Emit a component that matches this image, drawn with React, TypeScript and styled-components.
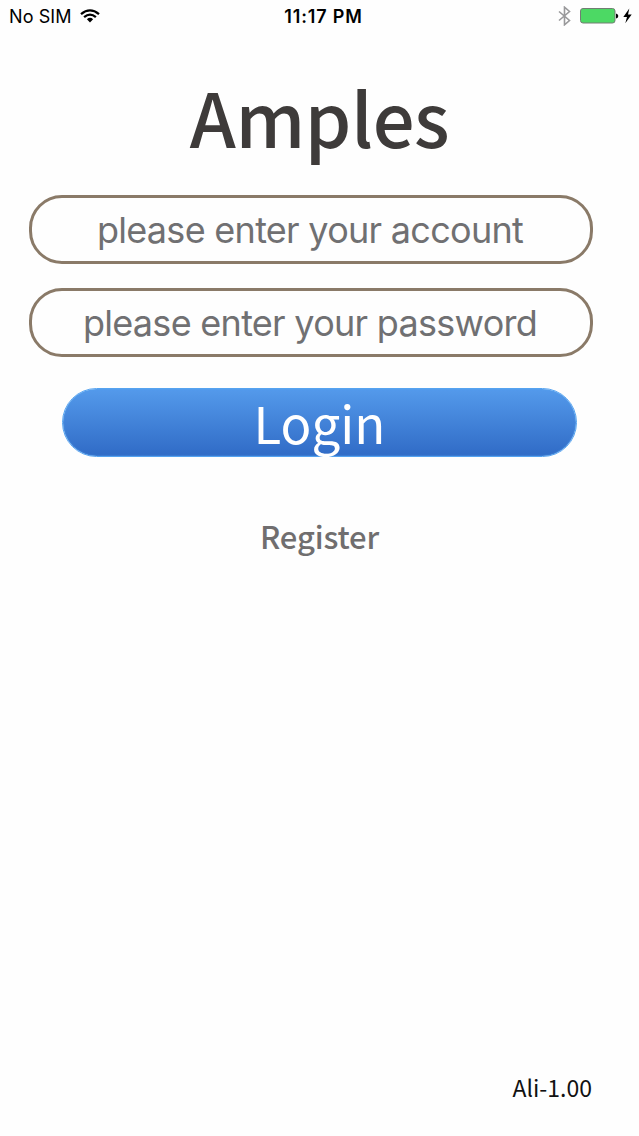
import React from "react";
import styled, { createGlobalStyle } from "styled-components";

const GlobalStyle = createGlobalStyle`
  *, *::before, *::after { box-sizing: border-box; }
  html, body { margin: 0; padding: 0; background: #fefefe; }
`;

const sans = `"Noto Sans CJK SC", "Noto Sans", sans-serif`;

const Screen = styled.main`
  display: flex;
  flex-direction: column;
  width: 100%;
  height: 1136px;
  overflow: hidden;
  background: #fefefe;
  font-family: ${sans};
`;

const StatusBar = styled.header`
  display: grid;
  grid-template-columns: 1fr auto 1fr;
  align-items: center;
  height: 32px;
  padding: 0 7px 0 9px;
  color: #000;
  font-family: Inter, sans-serif;
  font-size: 18px;
  line-height: 33px;
`;

const Carrier = styled.div`
  display: flex;
  align-items: center;
  gap: 8px;
  letter-spacing: 0.1px;

  svg {
    margin-bottom: 2px;
  }
`;

const Clock = styled.time`
  font-weight: 600;
  letter-spacing: 0.85px;
  transform: translateX(3px);
`;

const Indicators = styled.div`
  display: flex;
  align-items: center;
  justify-content: flex-end;
  padding-bottom: 2px;
`;

const Title = styled.h1`
  margin: 28px 0 0;
  height: 135px;
  color: #3e3b3a;
  font-size: 74px;
  font-weight: 500;
  letter-spacing: -0.4px;
  line-height: 112px;
  text-align: center;
`;

const Form = styled.form`
  display: flex;
  flex-direction: column;
  padding: 0 46px 0 29px;
`;

const Field = styled.input`
  width: 100%;
  height: 69px;
  margin-bottom: 24px;
  padding: 1px 2px 0 0;
  border: 3px solid #8a7a68;
  border-radius: 33px;
  outline: none;
  background: transparent;
  color: #3e3b3a;
  font-family: Inter, sans-serif;
  font-size: 36px;
  letter-spacing: -0.72px;
  text-align: center;

  &::placeholder {
    color: #707072;
    opacity: 1;
  }
`;

const LoginButton = styled.button`
  height: 69px;
  margin: 7px 16px 0 33px;
  padding: 0;
  border: 1.5px solid #55a3f0;
  border-radius: 36px;
  background: linear-gradient(#549aeb, #306bc6) padding-box;
  box-shadow: inset 0 0 2px #55a3f0;
  color: #fff;
  font-family: ${sans};
  font-size: 51px;
  line-height: 65px;
`;

const RegisterLink = styled.a`
  align-self: center;
  margin-top: 55px;
  color: #706e6f;
  font-size: 31px;
  font-weight: 500;
  letter-spacing: -0.15px;
  line-height: 48px;
`;

const Version = styled.footer`
  margin: auto 47px 31px auto;
  color: #111;
  font-size: 23px;
  line-height: 36px;
`;

const WifiIcon = () => (
  <svg width="20" height="14" viewBox="0 0 20 14" fill="none" stroke="#000" strokeWidth="2.3">
    <path d="M1 5.2Q10-2.4 19 5.2" />
    <path d="M4.1 8.2Q10 3.1 15.9 8.2" />
    <path d="M6.9 10.2Q10 7.4 13.1 10.2L10 13.4Z" fill="#000" stroke="none" />
  </svg>
);

const BluetoothIcon = () => (
  <svg width="13" height="20" viewBox="0 0 13 20" fill="none" stroke="#99999b" strokeWidth="1.6">
    <path d="M1 5.5L11.5 14.5L6.5 18.8V1.2L11.5 5.5L1 14.5" />
  </svg>
);

const BatteryIcon = () => (
  <svg width="39" height="16" viewBox="0 0 39 16">
    <rect x="0.5" y="0.5" width="34.5" height="14.5" rx="2.5" fill="#4cd964" stroke="#727d73" />
    <path d="M36 5.5Q38.3 6 38.3 8T36 10.5Z" fill="#000" />
  </svg>
);

const BoltIcon = () => (
  <svg width="9" height="16" viewBox="0 0 9 16" fill="#000">
    <path d="M6.3 0.5L0.3 9H4L2.3 15.2L8.7 6.4H5Z" />
  </svg>
);

const Gap = styled.span<{ $width: number }>`
  width: ${({ $width }) => $width}px;
`;

export default function App() {
  return (
    <>
      <GlobalStyle />
      <Screen>
        <StatusBar>
          <Carrier>
            No SIM
            <WifiIcon />
          </Carrier>
          <Clock>11:17 PM</Clock>
          <Indicators>
            <BluetoothIcon />
            <Gap $width={9} />
            <BatteryIcon />
            <Gap $width={4} />
            <BoltIcon />
          </Indicators>
        </StatusBar>
        <Title>Amples</Title>
        <Form>
          <Field type="text" placeholder="please enter your account" />
          <Field type="password" placeholder="please enter your password" />
          <LoginButton type="button">Login</LoginButton>
        </Form>
        <RegisterLink>Register</RegisterLink>
        <Version>Ali-1.00</Version>
      </Screen>
    </>
  );
}
